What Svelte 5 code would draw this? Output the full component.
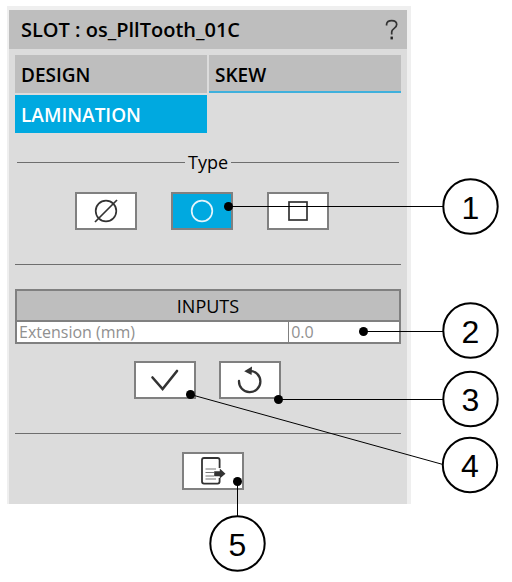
<script>
    let tab = $state('LAMINATION');
    let shape = $state('circle');
    let extension = $state('0.0');

    const tabs = ['DESIGN', 'SKEW', 'LAMINATION'];
    const shapes = ['none', 'circle', 'square'];

    // dot position, end of the line, centre of the numbered circle
    const callouts = [
        { label: '1', dot: [228.5, 206.5], end: [443, 206.5], at: [470.5, 206.5] },
        { label: '2', dot: [363.5, 331.5], end: [443, 331.5], at: [470.5, 330.5] },
        { label: '3', dot: [278.5, 399.5], end: [443, 399.5], at: [470.5, 399] },
        { label: '4', dot: [190.5, 394.5], end: [443, 464.5], at: [470, 465] },
        { label: '5', dot: [237.5, 481.5], end: [237.5, 516], at: [237.5, 543.5] },
    ];
</script>

<div class="figure">
    <section class="panel">
        <header class="title">
            <h1>SLOT : os_PllTooth_01C</h1>
            <button class="help" aria-label="Help">
                <svg width="14" height="22" viewBox="0 0 14 22">
                    <path d="M1.6 6.4V5.2Q2 1.6 6.7 1.6Q11.7 1.6 11.7 5.6Q11.7 7.7 9.2 9.4Q6.7 11.2 6.7 13V15.6" fill="none" stroke="#333" stroke-width="1.7" />
                    <path d="M6.7 17.6V20.4" stroke="#222" stroke-width="2.4" />
                </svg>
            </button>
        </header>

        <div class="content">
            <div class="tabs" role="tablist">
                {#each tabs as name}
                    <button class="tab" role="tab" class:active={tab === name} class:underlined={name === 'SKEW'}
                        aria-selected={tab === name} onclick={() => (tab = name)}>{name}</button>
                {/each}
            </div>

            <div class="legend"><span>Type</span></div>

            <div class="shapes">
                {#each shapes as name}
                    <button class="tool" class:active={shape === name} aria-label={name}
                        aria-pressed={shape === name} onclick={() => (shape = name)}>
                        <svg width="26" height="26" viewBox="0 0 26 26" fill="none" stroke="currentColor" stroke-width="1.7">
                            {#if name === 'none'}
                                <circle cx="13" cy="13" r="10.3" />
                                <path d="M2 24L24 2" />
                            {:else if name === 'circle'}
                                <circle cx="13" cy="13" r="10.3" />
                            {:else}
                                <rect x="4" y="4" width="18" height="18" />
                            {/if}
                        </svg>
                    </button>
                {/each}
            </div>

            <hr />

            <table>
                <colgroup>
                    <col class="wide" />
                    <col />
                </colgroup>
                <thead>
                    <tr><th colspan="2">INPUTS</th></tr>
                </thead>
                <tbody>
                    <tr>
                        <td class="name"><label for="extension">Extension (mm)</label></td>
                        <td><input id="extension" type="text" bind:value={extension} /></td>
                    </tr>
                </tbody>
            </table>

            <div class="actions">
                <button class="tool" aria-label="Apply">
                    <svg width="30" height="26" viewBox="0 0 30 26" fill="none" stroke="currentColor" stroke-width="2.6" stroke-linecap="round">
                        <path d="M2.5 10.5L12.6 22L27 4" />
                    </svg>
                </button>
                <button class="tool" aria-label="Reset">
                    <svg width="28" height="28" viewBox="0 0 28 28">
                        <path d="M3 15A10.7 10.7 0 1 0 13.5 4.8" fill="none" stroke="currentColor" stroke-width="2.3" stroke-linecap="round" />
                        <path d="M8.2 5.2L16 0.4L15.6 9Z" fill="currentColor" />
                    </svg>
                </button>
            </div>

            <hr />

            <div class="exit">
                <button class="tool" aria-label="Close">
                    <svg width="28" height="30" viewBox="0 0 28 30" fill="none" stroke="currentColor">
                        <path d="M20.6 12V4Q20.6 2 18.6 2H5Q3 2 3 4V25.6Q3 27.6 5 27.6H18.6Q20.6 27.6 20.6 25.6V22" stroke-width="1.8" />
                        <path d="M6.5 13H17M6.5 16.5H15M6.5 20H15M6.5 23H17" stroke="#777" stroke-width="1.2" />
                        <path d="M15.2 15.2H20.8V12.5L26.5 17.7L20.8 22.5V20.2H15.2Z" fill="currentColor" stroke="none" />
                    </svg>
                </button>
            </div>
        </div>
    </section>

    <svg class="callouts" viewBox="0 0 512 582">
        {#each callouts as c}
            <line x1={c.dot[0]} y1={c.dot[1]} x2={c.end[0]} y2={c.end[1]} />
            <circle class="dot" cx={c.dot[0]} cy={c.dot[1]} r="4.5" />
            <circle class="ring" cx={c.at[0]} cy={c.at[1]} r="27.2" />
            <text x={c.at[0]} y={c.at[1] + 12}>{c.label}</text>
        {/each}
    </svg>
</div>

<style>
    :global(body) {
        background: #fff;
    }

    .figure {
        position: relative;
        max-width: 512px;
        padding: 6px 101px 78px 7px;
        box-sizing: border-box;
        font-family: "Open Sans", "Noto Sans", sans-serif;
        color: #000;
    }

    .panel {
        border: solid #efefef;
        border-width: 4px 4px 0 2px;
        background: #dcdcdc;
    }

    .title {
        display: flex;
        align-items: center;
        justify-content: space-between;
        height: 39px;
        padding: 0 8px 0 12px;
        background: #bebebe;
    }

    h1 {
        margin: 0;
        font-size: 20px;
        font-weight: 600;
    }

    button {
        font-family: inherit;
        cursor: pointer;
    }

    .help {
        display: flex;
        padding: 0;
        border: 0;
        background: none;
    }

    .content {
        padding: 6px 6px 14px;
    }

    .tabs {
        display: grid;
        grid-template-columns: 1fr 1fr;
        gap: 2px;
    }

    .tab {
        height: 38px;
        padding: 2px 6px 0;
        border: 0;
        background: #bebebe;
        color: #000;
        font-size: 19px;
        font-weight: 600;
        text-align: left;
    }

    .tab.underlined {
        box-shadow: inset 0 -2px #3fb0dc;
    }

    .tab.active {
        background: #00a9e0;
        color: #fff;
    }

    .legend {
        display: flex;
        align-items: center;
        gap: 3px;
        margin: 16px 2px 17px;
        font-size: 18px;
        line-height: 26px;
    }

    .legend::before,
    .legend::after {
        content: '';
        flex: 1;
        height: 1px;
        background: #6e6e6e;
    }

    .tool {
        display: flex;
        align-items: center;
        justify-content: center;
        width: 62px;
        height: 38px;
        padding: 0;
        border: 2px solid #808080;
        background: #fff;
        color: #333;
    }

    .tool.active {
        background: #00a9e0;
        color: #e4f4fb;
    }

    .shapes {
        display: flex;
        justify-content: center;
        gap: 34px;
        padding-right: 13px;
    }

    hr {
        height: 1px;
        margin: 34px 0 24px;
        border: 0;
        background: #6e6e6e;
    }

    table {
        width: 100%;
        border: 2px solid #808080;
        border-collapse: collapse;
        table-layout: fixed;
    }

    .wide {
        width: 71%;
    }

    th {
        height: 29px;
        padding: 0;
        border-bottom: 2px solid #808080;
        background: #bebebe;
        font-size: 18px;
        font-weight: 400;
        line-height: 26px;
    }

    td {
        height: 20px;
        padding: 0 2px;
        background: #fff;
        color: #909090;
        font-size: 16px;
        line-height: 20px;
    }

    .name {
        border-right: 1px solid #808080;
    }

    input {
        display: block;
        width: 100%;
        height: 20px;
        padding: 0;
        border: 0;
        background: none;
        color: inherit;
        font: inherit;
    }

    .actions {
        display: flex;
        justify-content: center;
        gap: 23px;
        padding-right: 2px;
        margin-top: 17px;
    }

    .exit {
        display: flex;
        justify-content: center;
        padding-left: 10px;
        margin-top: -6px;
    }

    .callouts {
        position: absolute;
        top: 0;
        left: 0;
        width: 100%;
        pointer-events: none;
    }

    line {
        stroke: #000;
        stroke-width: 1;
    }

    .ring {
        fill: #fff;
        stroke: #000;
        stroke-width: 2;
    }

    text {
        font-family: "Liberation Sans", Arial, sans-serif;
        font-size: 32px;
        text-anchor: middle;
    }
</style>
